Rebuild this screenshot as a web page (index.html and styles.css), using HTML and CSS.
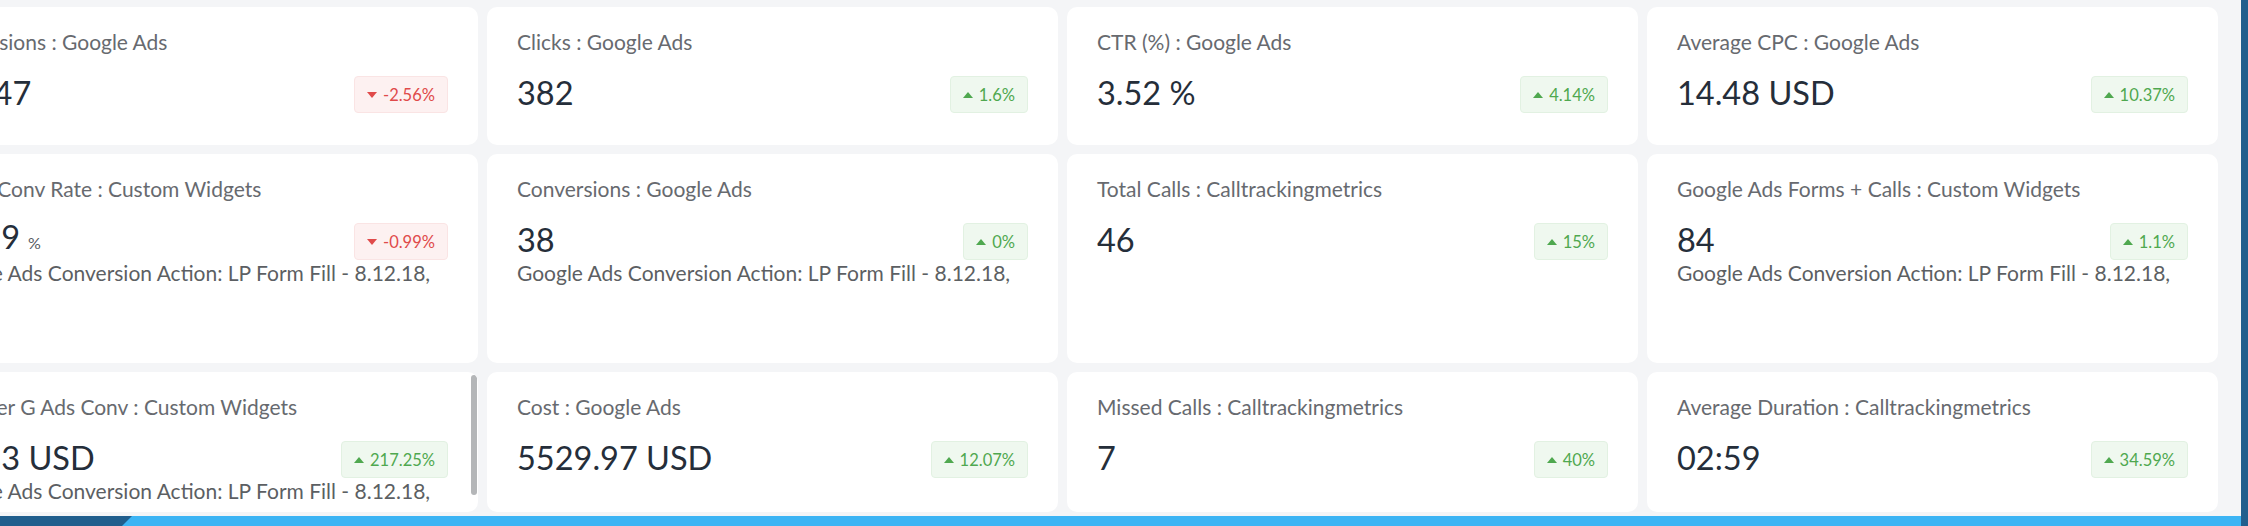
FILE: index.html
```html
<!DOCTYPE html>
<html lang="en">
<head>
<meta charset="utf-8">
<title>KPI Dashboard</title>
<link rel="stylesheet" href="styles.css">
</head>
<body>
<div class="frame">
  <main class="main">
    <div class="viewport">
      <div class="grid">
        <!-- Row 1 -->
        <div class="card">
          <div class="title">Impressions : Google Ads</div>
          <div class="value-row"><div class="value">10847</div><span class="badge down"><i class="caret"></i>-2.56%</span></div>
        </div>
        <div class="card">
          <div class="title">Clicks : Google Ads</div>
          <div class="value-row"><div class="value">382</div><span class="badge up"><i class="caret"></i>1.6%</span></div>
        </div>
        <div class="card">
          <div class="title">CTR (%) : Google Ads</div>
          <div class="value-row"><div class="value">3.52 %</div><span class="badge up"><i class="caret"></i>4.14%</span></div>
        </div>
        <div class="card">
          <div class="title">Average CPC : Google Ads</div>
          <div class="value-row"><div class="value">14.48 USD</div><span class="badge up"><i class="caret"></i>10.37%</span></div>
        </div>

        <!-- Row 2 -->
        <div class="card">
          <div class="title">G Ads Conv Rate : Custom Widgets</div>
          <div class="value-row"><div class="value">21.99<span class="unit-small">%</span></div><span class="badge down"><i class="caret"></i>-0.99%</span></div>
          <div class="desc">Google Ads Conversion Action: LP Form Fill - 8.12.18,</div>
        </div>
        <div class="card">
          <div class="title">Conversions : Google Ads</div>
          <div class="value-row"><div class="value">38</div><span class="badge up"><i class="caret"></i>0%</span></div>
          <div class="desc">Google Ads Conversion Action: LP Form Fill - 8.12.18,</div>
        </div>
        <div class="card">
          <div class="title">Total Calls : Calltrackingmetrics</div>
          <div class="value-row"><div class="value">46</div><span class="badge up"><i class="caret"></i>15%</span></div>
        </div>
        <div class="card">
          <div class="title">Google Ads Forms + Calls : Custom Widgets</div>
          <div class="value-row"><div class="value">84</div><span class="badge up"><i class="caret"></i>1.1%</span></div>
          <div class="desc">Google Ads Conversion Action: LP Form Fill - 8.12.18,</div>
        </div>

        <!-- Row 3 -->
        <div class="card scrolling">
          <div class="title">Cost per G Ads Conv : Custom Widgets</div>
          <div class="value-row"><div class="value">65.83 USD</div><span class="badge up"><i class="caret"></i>217.25%</span></div>
          <div class="desc">Google Ads Conversion Action: LP Form Fill - 8.12.18,</div>
          <span class="scroll-thumb"></span>
        </div>
        <div class="card">
          <div class="title">Cost : Google Ads</div>
          <div class="value-row"><div class="value">5529.97 USD</div><span class="badge up"><i class="caret"></i>12.07%</span></div>
        </div>
        <div class="card">
          <div class="title">Missed Calls : Calltrackingmetrics</div>
          <div class="value-row"><div class="value">7</div><span class="badge up"><i class="caret"></i>40%</span></div>
        </div>
        <div class="card">
          <div class="title">Average Duration : Calltrackingmetrics</div>
          <div class="value-row"><div class="value">02:59</div><span class="badge up"><i class="caret"></i>34.59%</span></div>
        </div>
      </div>
    </div>
    <div class="bottom-bar"><div class="bar-accent"></div></div>
  </main>
  <div class="side-strip"></div>
</div>
</body>
</html>
```

FILE: styles.css
```css
html, body {
  margin: 0;
  padding: 0;
  height: 100%;
}

body {
  background: #f4f5f7;
  font-family: Lato, "Open Sans", "Liberation Sans", sans-serif;
  overflow: hidden;
}

.frame {
  display: flex;
  height: 526px;
}

.main {
  flex: 1;
  min-width: 0;
  display: flex;
  flex-direction: column;
}

.viewport {
  flex: 1;
  overflow: hidden;
  padding-top: 7px;
}

.grid {
  display: grid;
  grid-template-columns: repeat(4, 571px);
  grid-template-rows: 138px 209px 140px;
  gap: 9px;
  margin-left: -93px;
}

.card {
  position: relative;
  background: #ffffff;
  border-radius: 10px;
  padding: 21px 30px 0;
  overflow: hidden;
  box-sizing: border-box;
}

.title {
  font-size: 21px;
  line-height: 28px;
  color: #676a6f;
  white-space: nowrap;
}

.value-row {
  display: flex;
  align-items: center;
  justify-content: space-between;
  height: 44px;
  margin-top: 15px;
}

.value {
  font-size: 32.5px;
  line-height: 44px;
  color: #252e3a;
  white-space: nowrap;
}

.unit-small {
  font-size: 16px;
  color: #555a60;
  margin-left: 8px;
}

.desc {
  font-size: 21px;
  line-height: 28px;
  color: #5c5f63;
  margin-top: -3px;
  white-space: nowrap;
}

.badge {
  display: inline-flex;
  align-items: center;
  gap: 6px;
  height: 37px;
  margin-top: 3px;
  padding: 0 12px;
  border-radius: 4px;
  font-size: 16.5px;
  box-sizing: border-box;
}

.badge.up {
  color: #4fa84f;
  background: #eff8ef;
  border: 1px solid #e2f1e2;
}

.badge.down {
  color: #e04a4a;
  background: #fdf1f1;
  border: 1px solid #fae4e4;
}

.caret {
  display: inline-block;
  width: 0;
  height: 0;
  border-left: 5px solid transparent;
  border-right: 5px solid transparent;
}

.badge.up .caret {
  border-bottom: 6px solid currentColor;
}

.badge.down .caret {
  border-top: 6px solid currentColor;
}

.scroll-thumb {
  position: absolute;
  right: 1px;
  top: 3px;
  width: 6px;
  height: 120px;
  background: #b4b6b8;
  border-radius: 3px;
}

.bottom-bar {
  height: 10px;
  background: #3cb4f4;
  display: flex;
}

.bar-accent {
  width: 132px;
  background: #205e8d;
  clip-path: polygon(0 0, 100% 0, calc(100% - 10px) 100%, 0 100%);
}

.side-strip {
  width: 7px;
  background: #205e8d;
}
```
